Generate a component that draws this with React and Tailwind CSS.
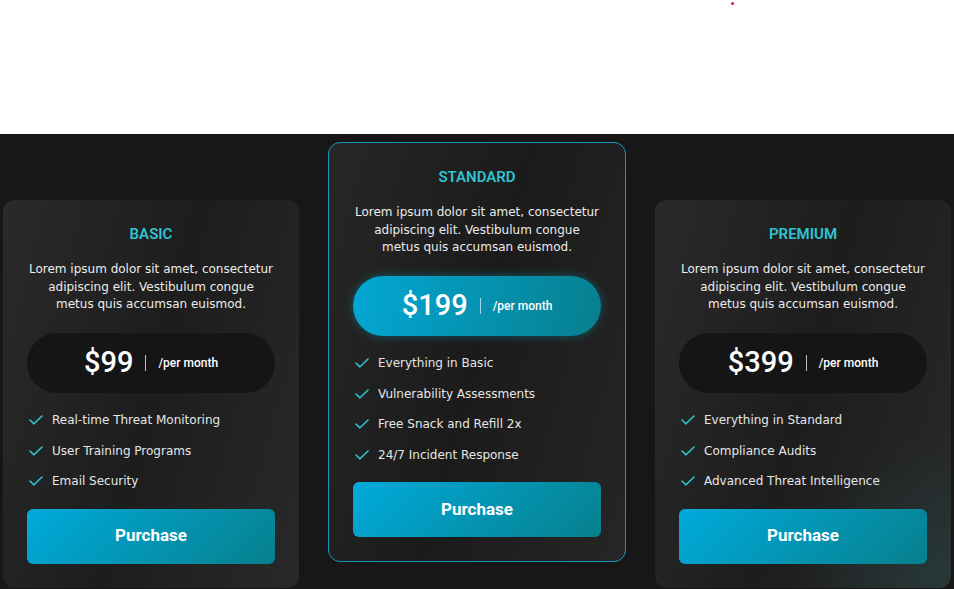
const plans = [
  {
    name: 'BASIC',
    price: '$99',
    features: ['Real-time Threat Monitoring', 'User Training Programs', 'Email Security'],
  },
  {
    name: 'STANDARD',
    price: '$199',
    featured: true,
    features: ['Everything in Basic', 'Vulnerability Assessments', 'Free Snack and Refill 2x', '24/7 Incident Response'],
  },
  {
    name: 'PREMIUM',
    price: '$399',
    glow: true,
    features: ['Everything in Standard', 'Compliance Audits', 'Advanced Threat Intelligence'],
  },
]

const CheckIcon = () => (
  <svg width="14" height="10" viewBox="0 0 14 10" className="shrink-0">
    <polyline points="1,5 5,8.8 13,1" fill="none" stroke="#2ec4d2" strokeWidth="1.6" strokeLinecap="round" strokeLinejoin="round" />
  </svg>
)

const PlanCard = ({ plan }) => {
  let cardClass = 'w-[296px] mt-[58px] rounded-[12px] px-6 pt-6 pb-6 bg-[linear-gradient(105deg,#2a2a2a_0%,#1d1d1d_50%,#292929_100%)]'
  if (plan.featured) {
    cardClass = 'w-[298px] rounded-[12px] border border-[#1699b9] px-6 pt-6 pb-6 bg-[linear-gradient(105deg,#272727_0%,#1b1b1b_50%,#262626_100%)]'
  }
  if (plan.glow) {
    cardClass = 'w-[296px] mt-[58px] rounded-[12px] px-6 pt-6 pb-6 bg-[radial-gradient(circle_at_100%_100%,rgba(38,70,72,0.55)_0%,rgba(38,70,72,0)_32%),linear-gradient(105deg,#2a2a2a_0%,#1d1d1d_50%,#292929_100%)]'
  }

  return (
    <div className={cardClass}>
      {/* Title + blurb */}
      <h3 className="text-center text-[15px] leading-[20px] font-semibold text-[#2ec4d2] font-['Roboto',sans-serif]">
        {plan.name}
      </h3>
      <p className="mt-[17px] text-center text-[12px] leading-[17.5px] text-[#ececec] whitespace-nowrap font-['DejaVu_Sans',sans-serif]">
        Lorem ipsum dolor sit amet, consectetur<br />
        adipiscing elit. Vestibulum congue<br />
        metus quis accumsan euismod.
      </p>

      {/* Price pill */}
      <div
        className={
          plan.featured
            ? 'mt-[19px] h-[60px] rounded-full flex items-center justify-center gap-3 bg-[linear-gradient(100deg,#03a7d5,#077f8e)] shadow-[0_0_10px_rgba(0,190,230,0.35)] font-["Roboto",sans-serif]'
            : 'mt-[19px] h-[60px] rounded-full flex items-center justify-center gap-3 bg-[#151515] font-["Roboto",sans-serif]'
        }
      >
        <span className="text-[29px] leading-none font-medium text-white">{plan.price}</span>
        <span className={plan.featured ? 'w-px h-4 bg-[#9fd9e6]' : 'w-px h-4 bg-[#bdbdbd]'} />
        <span className="text-[12px] font-medium text-white">/per month</span>
      </div>

      {/* Features */}
      <ul className="mt-[17.5px] flex flex-col gap-[10.5px] font-['DejaVu_Sans',sans-serif]">
        {plan.features.map(f => (
          <li key={f} className="flex items-center gap-[9px] pl-[2px] h-5 text-[12px] text-[#e6e6e6]">
            <CheckIcon />
            <span>{f}</span>
          </li>
        ))}
      </ul>

      <button className="mt-[17.5px] w-full h-[55px] rounded-[6px] bg-[linear-gradient(135deg,#00aadb_0%,#07808d_100%)] text-white text-[17px] font-bold font-['Roboto',sans-serif]">
        Purchase
      </button>
    </div>
  )
}

export default function App() {
  return (
    <div className="w-[954px] h-[589px] overflow-hidden bg-white">
      {/* Top white band */}
      <div className="h-[134px] pl-[731px] pt-[2px]">
        <div className="w-[3px] h-[3px] rounded-full bg-[#e8102a]" />
      </div>

      {/* Pricing section */}
      <div className="h-[455px] bg-[#171717] flex items-start gap-[29px] px-[3px] pt-2">
        {plans.map(p => (
          <PlanCard key={p.name} plan={p} />
        ))}
      </div>
    </div>
  )
}
